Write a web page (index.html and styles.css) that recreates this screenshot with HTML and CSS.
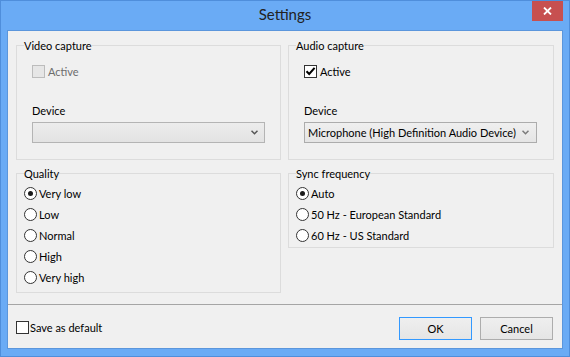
FILE: index.html
```html
<!DOCTYPE html>
<html lang="en">
<head>
    <meta charset="UTF-8">
    <title>Settings</title>
    <link rel="stylesheet" href="styles.css">
</head>
<body>
    <div class="window">
        <div class="titlebar">
            <span></span>
            <span class="title">Settings</span>
            <button class="close-btn">
                <svg width="9" height="8" viewBox="0 0 9 8"><path d="M1 0.5 L8 7.5 M8 0.5 L1 7.5" stroke="#fff" stroke-width="1.8"/></svg>
            </button>
        </div>

        <div class="client">
            <div class="panels">
                <fieldset class="group capture">
                    <legend>Video capture</legend>
                    <div class="check disabled">
                        <span class="box"></span>
                        <span>Active</span>
                    </div>
                    <div class="field-label">Device</div>
                    <div class="combo disabled">
                        <span class="combo-text"></span>
                        <svg width="7" height="5" viewBox="0 0 7 5"><path d="M0.5 0.8 L3.5 3.8 L6.5 0.8" fill="none" stroke="#555" stroke-width="1.5"/></svg>
                    </div>
                </fieldset>

                <fieldset class="group capture">
                    <legend>Audio capture</legend>
                    <div class="check">
                        <span class="box">
                            <svg width="11" height="11" viewBox="0 0 11 11"><path d="M1.5 5.2 L4.2 8 L9.6 1.8" fill="none" stroke="#000" stroke-width="2"/></svg>
                        </span>
                        <span>Active</span>
                    </div>
                    <div class="field-label">Device</div>
                    <div class="combo">
                        <span class="combo-text">Microphone (High Definition Audio Device)</span>
                        <svg width="7" height="5" viewBox="0 0 7 5"><path d="M0.5 0.8 L3.5 3.8 L6.5 0.8" fill="none" stroke="#7a7a7a" stroke-width="1.5"/></svg>
                    </div>
                </fieldset>

                <fieldset class="group options quality">
                    <legend>Quality</legend>
                    <div class="radio checked"><span class="dot"></span>Very low</div>
                    <div class="radio"><span class="dot"></span>Low</div>
                    <div class="radio"><span class="dot"></span>Normal</div>
                    <div class="radio"><span class="dot"></span>High</div>
                    <div class="radio"><span class="dot"></span>Very high</div>
                </fieldset>

                <fieldset class="group options sync">
                    <legend>Sync frequency</legend>
                    <div class="radio checked"><span class="dot"></span>Auto</div>
                    <div class="radio"><span class="dot"></span>50 Hz - European Standard</div>
                    <div class="radio"><span class="dot"></span>60 Hz - US Standard</div>
                </fieldset>
            </div>

            <div class="footer">
                <div class="check save">
                    <span class="box"></span>
                    <span>Save as default</span>
                </div>
                <div class="buttons">
                    <button class="btn default">OK</button>
                    <button class="btn">Cancel</button>
                </div>
            </div>
        </div>
    </div>
</body>
</html>
```

FILE: styles.css
```css
* {
    margin: 0;
    padding: 0;
    box-sizing: border-box;
}

body {
    font-family: Lato, sans-serif;
    font-size: 11px;
    color: #000;
    background-color: #6aabf5;
}

.window {
    width: 570px;
    height: 357px;
    display: flex;
    flex-direction: column;
    border: 1px solid #4f8edb;
    background-color: #6aabf5;
}

.titlebar {
    height: 29px;
    display: grid;
    grid-template-columns: 1fr auto 1fr;
}

.title {
    font-size: 15px;
    line-height: 27px;
    color: #222;
}

.close-btn {
    justify-self: end;
    width: 31px;
    height: 20px;
    margin-right: 6px;
    border: none;
    background-color: #c75050;
    display: flex;
    align-items: center;
    justify-content: center;
}

.close-btn svg {
    display: block;
}

.client {
    flex: 1;
    margin: 0 6px 7px;
    display: flex;
    flex-direction: column;
    border: 1px solid #5b96dc;
    background-color: #f0f0f0;
}

.panels {
    display: grid;
    grid-template-columns: 265px 266px;
    column-gap: 7px;
    row-gap: 7px;
    align-items: start;
    padding: 8px 8px 11px;
}

/* Group boxes */
.group {
    min-width: 0;
    border: 1px solid #dcdcdc;
    padding: 0 0 0 7px;
}

.group legend {
    padding: 0;
    line-height: 13px;
}

.capture {
    padding-left: 15px;
    padding-bottom: 16px;
}

.capture legend {
    margin-left: -8px;
}

.options {
    padding-top: 3px;
}

.quality {
    padding-bottom: 4px;
}

.sync {
    padding-bottom: 1px;
}

/* Check boxes */
.check {
    display: flex;
    align-items: center;
    gap: 3px;
    height: 13px;
    line-height: 15px;
}

.capture .check {
    margin-top: 13px;
}

.box {
    width: 13px;
    height: 13px;
    border: 1px solid #333;
    background-color: #fff;
}

.box svg {
    display: block;
}

.check.disabled {
    color: #6d6d6d;
}

.check.disabled .box {
    border-color: #bcbcbc;
    background-color: #e6e6e6;
}

.field-label {
    margin-top: 25px;
    line-height: 15px;
}

/* Combo boxes */
.combo {
    width: 233px;
    height: 21px;
    margin-top: 4px;
    display: flex;
    align-items: center;
    padding: 0 7px 0 3px;
    border: 1px solid #acacac;
    background: linear-gradient(#efefef, #e5e5e5);
}

.combo.disabled {
    padding-right: 6px;
    border-color: #b4b4b4;
    background: linear-gradient(#ececec, #e3e3e3);
}

.combo-text {
    flex: 1;
    line-height: 15px;
    white-space: nowrap;
}

.combo svg {
    display: block;
}

/* Radio buttons */
.radio {
    height: 21px;
    display: flex;
    align-items: center;
    gap: 2px;
    line-height: 15px;
}

.dot {
    width: 13px;
    height: 13px;
    border: 1px solid #333;
    border-radius: 50%;
    background-color: #fff;
    display: flex;
    align-items: center;
    justify-content: center;
}

.radio.checked .dot::after {
    content: '';
    width: 5px;
    height: 5px;
    border-radius: 50%;
    background-color: #1a1a1a;
}

/* Footer */
.footer {
    flex: 1;
    display: flex;
    align-items: flex-start;
    justify-content: space-between;
    padding: 12px 9px 0 8px;
    border-top: 1px solid #a5a5a5;
}

.save {
    margin-top: 4px;
    gap: 1px;
}

.buttons {
    display: flex;
    gap: 8px;
}

.btn {
    width: 73px;
    height: 23px;
    font-family: Lato, sans-serif;
    font-size: 11px;
    color: #000;
    border: 1px solid #adadad;
    background: linear-gradient(#efefef, #e5e5e5);
}

.btn.default {
    border-color: #3399ff;
}
```
